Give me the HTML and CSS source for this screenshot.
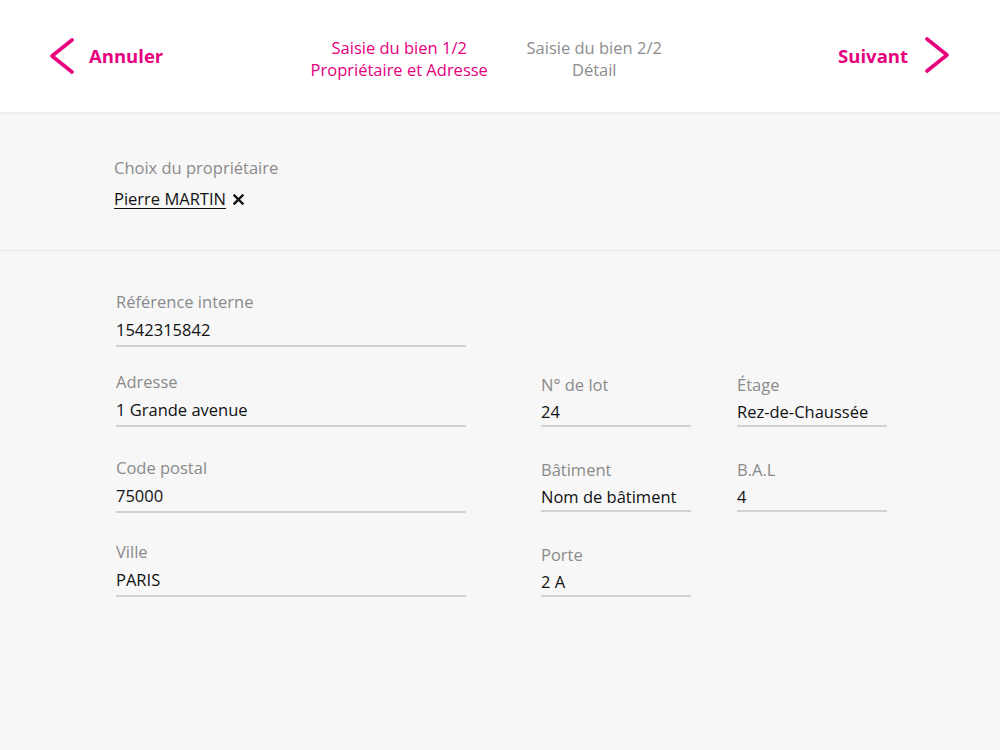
FILE: index.html
```html
<!DOCTYPE html>
<html lang="fr">
<head>
<meta charset="utf-8">
<title>Saisie du bien</title>
<link rel="stylesheet" href="styles.css">
</head>
<body>
<header class="topbar">
  <a class="nav-btn nav-prev" href="#">
    <svg class="chev" width="26" height="36" viewBox="0 0 26 36"><polyline points="23,2 3,18 23,34" fill="none" stroke="#e6007e" stroke-width="3.6" stroke-linecap="round" stroke-linejoin="round"/></svg>
    <span>Annuler</span>
  </a>
  <div class="steps">
    <div class="step step-active">Saisie du bien 1/2<br>Propriétaire et Adresse</div>
    <div class="step">Saisie du bien 2/2<br>Détail</div>
  </div>
  <a class="nav-btn nav-next" href="#">
    <span>Suivant</span>
    <svg class="chev" width="26" height="36" viewBox="0 0 26 36"><polyline points="3,2 23,18 3,34" fill="none" stroke="#e6007e" stroke-width="3.6" stroke-linecap="round" stroke-linejoin="round"/></svg>
  </a>
</header>

<main>
  <section class="owner">
    <div class="label">Choix du propriétaire</div>
    <div class="owner-value">
      <span class="owner-name">Pierre MARTIN</span>
      <svg class="remove" width="11" height="11" viewBox="0 0 11 11"><path d="M1.5 1.5 L9.5 9.5 M9.5 1.5 L1.5 9.5" stroke="#111" stroke-width="2.4" stroke-linecap="square"/></svg>
    </div>
  </section>

  <section class="form">
    <div class="col-left">
      <div class="field field-first">
        <div class="label">Référence interne</div>
        <div class="value">1542315842</div>
      </div>
      <div class="field">
        <div class="label">Adresse</div>
        <div class="value">1 Grande avenue</div>
      </div>
      <div class="field field-postal">
        <div class="label">Code postal</div>
        <div class="value">75000</div>
      </div>
      <div class="field">
        <div class="label">Ville</div>
        <div class="value">PARIS</div>
      </div>
    </div>
    <div class="col-right">
      <div class="field">
        <div class="label">N° de lot</div>
        <div class="value">24</div>
      </div>
      <div class="field">
        <div class="label">Étage</div>
        <div class="value">Rez-de-Chaussée</div>
      </div>
      <div class="field">
        <div class="label">Bâtiment</div>
        <div class="value">Nom de bâtiment</div>
      </div>
      <div class="field">
        <div class="label">B.A.L</div>
        <div class="value">4</div>
      </div>
      <div class="field">
        <div class="label">Porte</div>
        <div class="value">2 A</div>
      </div>
    </div>
  </section>
</main>
</body>
</html>
```

FILE: styles.css
```css
* { box-sizing: border-box; }

html, body {
  margin: 0;
  padding: 0;
}

body {
  width: 1000px;
  height: 750px;
  overflow: hidden;
  background: #f7f7f7;
  font-family: "Open Sans", "Noto Sans", sans-serif;
  font-size: 16.5px;
  color: #1a1a1a;
}

.topbar {
  height: 112px;
  background: #ffffff;
  box-shadow: 0 1px 3px rgba(0, 0, 0, 0.07);
  display: flex;
  align-items: center;
  position: relative;
}

.nav-btn {
  display: flex;
  align-items: center;
  color: #e6007e;
  text-decoration: none;
  font-weight: 700;
  font-size: 18.5px;
}

.nav-prev {
  margin-left: 49px;
  gap: 14px;
}

.nav-prev span { margin-top: -2px; }

.nav-next {
  margin-left: auto;
  margin-right: 50px;
  gap: 16px;
}

.nav-next .chev { margin-top: -3px; }
.nav-next span { margin-top: -2px; }

.steps {
  display: flex;
  margin-left: 146px;
  margin-top: 6px;
  gap: 15px;
}

.step {
  width: 180px;
  text-align: center;
  line-height: 22px;
  color: #8c8c8c;
  font-size: 16.5px;
}

.step-active { color: #e6007e; }

.owner {
  padding: 45px 0 39px 114px;
  border-bottom: 1px solid #e8e8e8;
}

.label {
  color: #8a8a8a;
  line-height: 22px;
}

.owner-value {
  margin-top: 8px;
  display: flex;
  align-items: center;
  gap: 7px;
  line-height: 24px;
}

.owner-name {
  color: #111;
  text-decoration: underline;
  text-decoration-thickness: 1px;
  text-underline-offset: 3px;
}

.remove { margin-top: 1px; }

.form {
  display: flex;
  padding: 40px 0 0 116px;
}

.col-left {
  width: 350px;
  display: flex;
  flex-direction: column;
  gap: 28px;
}

.field-first { margin-bottom: -4px; }
.field-postal { margin-top: 2px; }

.col-right {
  margin-left: 75px;
  margin-top: 83px;
  display: grid;
  grid-template-columns: 150px 150px;
  column-gap: 46px;
  row-gap: 32px;
  align-content: start;
}

.field .value {
  margin-top: 5px;
  line-height: 24px;
  padding-bottom: 3px;
  border-bottom: 2px solid #d2d2d2;
  color: #111;
}

.col-right .field .value {
  margin-top: 4px;
  padding-bottom: 1px;
}
```
